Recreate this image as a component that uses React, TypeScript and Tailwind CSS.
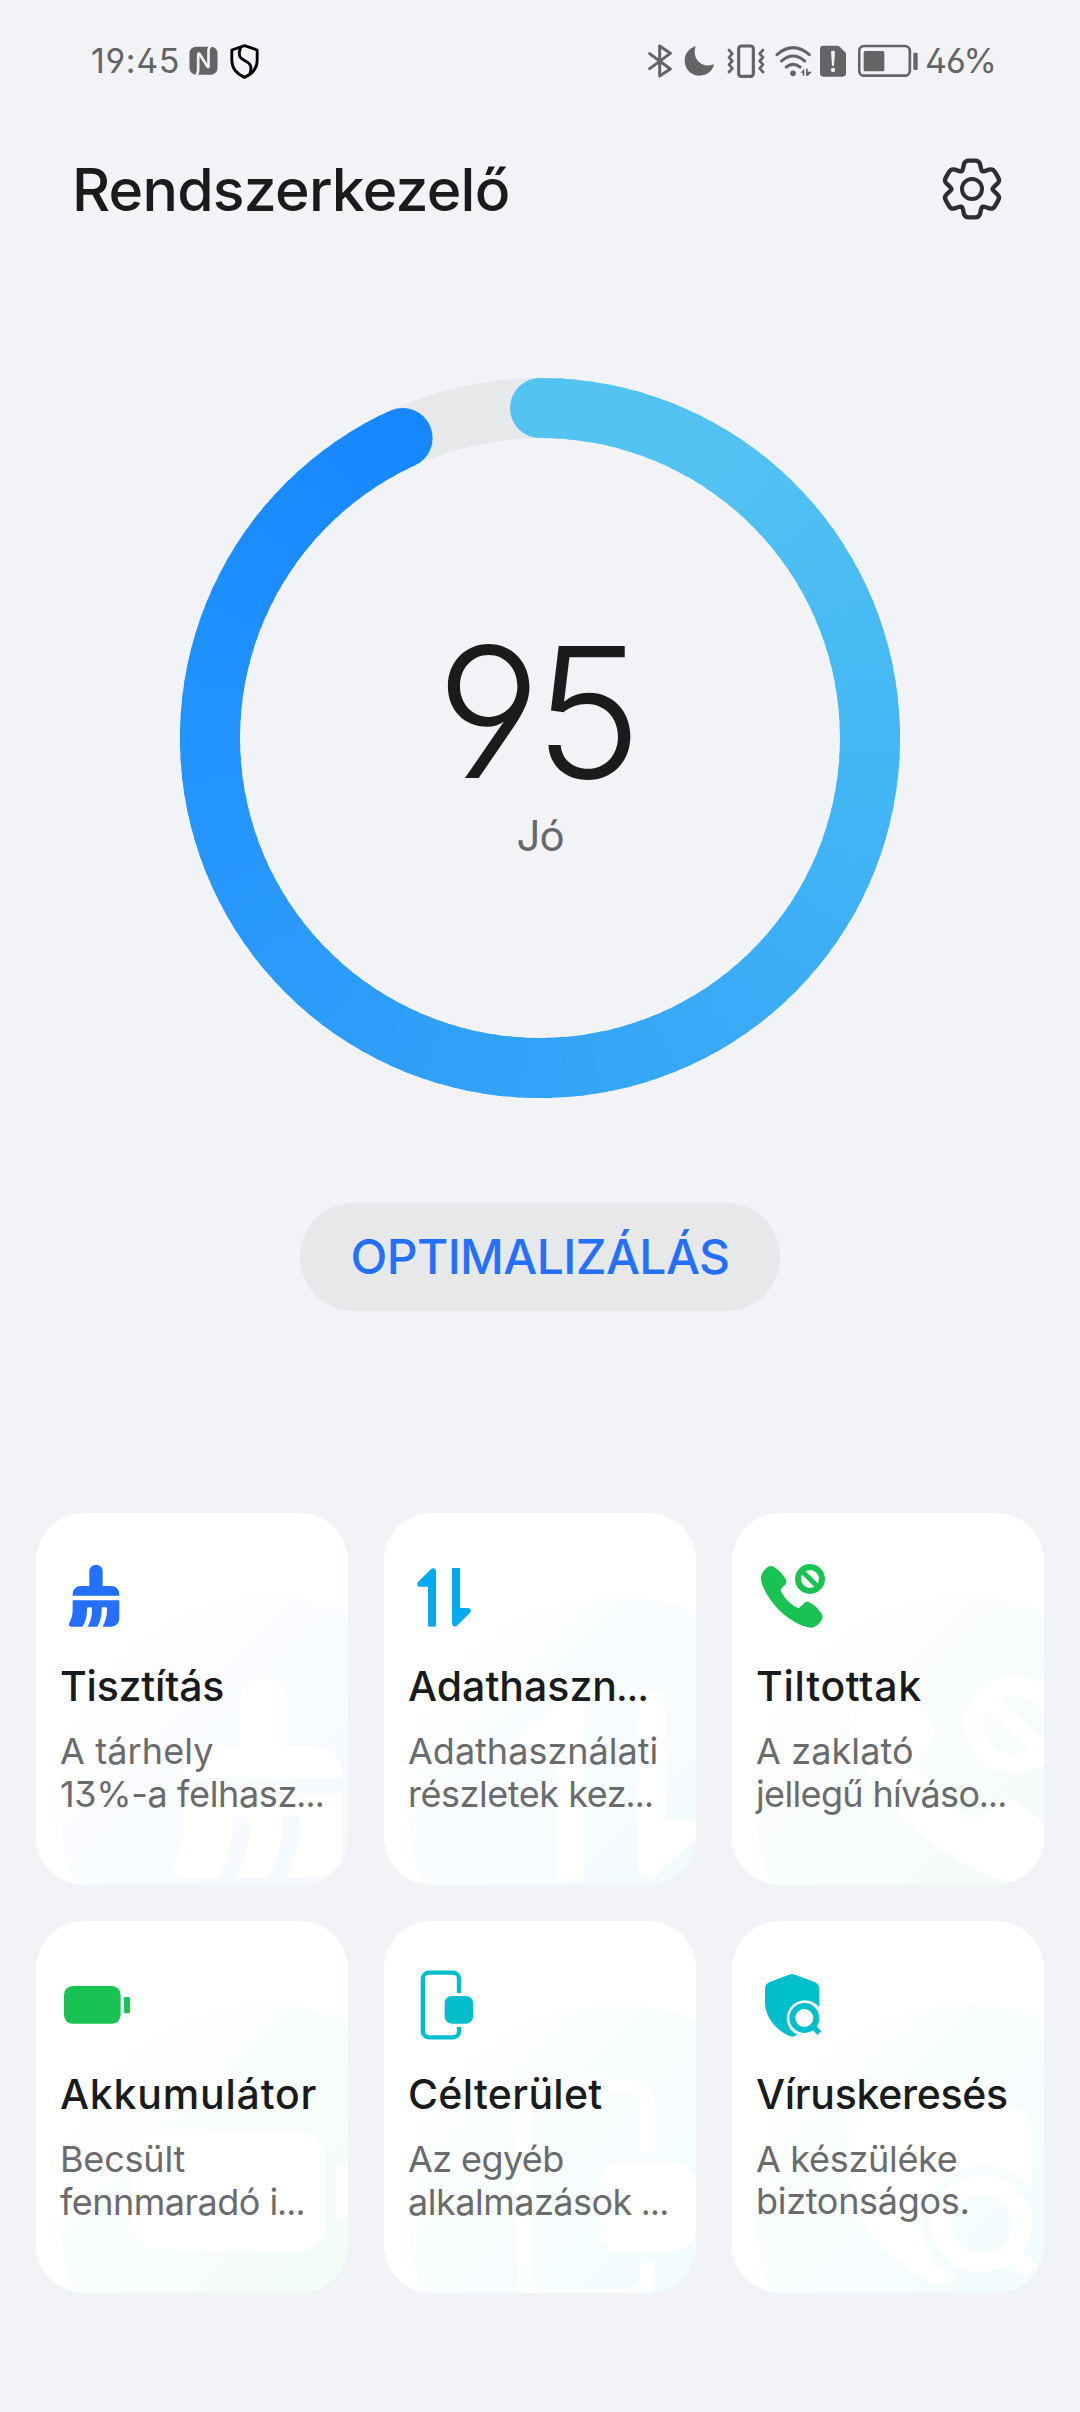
import type { ReactNode } from "react";

const RING_CENTER = 360;
const RING_RADIUS = 330;
const RING_SWEEP = 335.4;

const RING_STOPS: [number, [number, number, number]][] = [
  [0, [83, 196, 241]],
  [28, [82, 195, 241]],
  [90, [68, 183, 245]],
  [180, [51, 163, 249]],
  [270, [34, 147, 255]],
  [336, [22, 135, 255]],
];

function ringColor(deg: number) {
  for (let i = 1; i < RING_STOPS.length; i++) {
    const [d1, c1] = RING_STOPS[i];
    const [d0, c0] = RING_STOPS[i - 1];
    if (deg <= d1) {
      const t = (deg - d0) / (d1 - d0);
      return `rgb(${c0.map((v, k) => Math.round(v + (c1[k] - v) * t)).join(",")})`;
    }
  }
  return "rgb(22,135,255)";
}

function ringPoint(deg: number) {
  const a = ((deg - 90) * Math.PI) / 180;
  return [RING_CENTER + RING_RADIUS * Math.cos(a), RING_CENTER + RING_RADIUS * Math.sin(a)];
}

function ScoreRing() {
  const count = 130;
  const step = RING_SWEEP / count;
  const [ex, ey] = ringPoint(RING_SWEEP);
  return (
    <svg viewBox="0 0 720 720" className="col-start-1 row-start-1 size-[720px]">
      <circle cx={360} cy={360} r={330} fill="none" stroke="#e6e8ea" strokeWidth={60} />
      <circle cx={360} cy={30} r={30} fill={ringColor(0)} />
      <circle cx={ex} cy={ey} r={30} fill={ringColor(RING_SWEEP)} />
      {Array.from({ length: count }, (_, i) => {
        const from = i * step;
        const to = Math.min(RING_SWEEP, from + step * 1.4);
        const [x0, y0] = ringPoint(from);
        const [x1, y1] = ringPoint(to);
        return (
          <path
            key={i}
            d={`M${x0} ${y0}A330 330 0 0 1 ${x1} ${y1}`}
            fill="none"
            stroke={ringColor(from)}
            strokeWidth={60}
          />
        );
      })}
    </svg>
  );
}

/* Closed polygon with every corner rounded by a quadratic curve. */
function roundedPath(pts: number[][], r: number) {
  const n = pts.length;
  const toward = (a: number[], b: number[]) => {
    const len = Math.hypot(b[0] - a[0], b[1] - a[1]);
    const t = Math.min(0.5, r / len);
    return [a[0] + (b[0] - a[0]) * t, a[1] + (b[1] - a[1]) * t];
  };
  return (
    pts
      .map((p, i) => {
        const before = toward(p, pts[(i + n - 1) % n]);
        const after = toward(p, pts[(i + 1) % n]);
        return `${i ? "L" : "M"}${before.join(" ")}Q${p.join(" ")} ${after.join(" ")}`;
      })
      .join("") + "Z"
  );
}

function GearIcon() {
  const pts: number[][] = [];
  for (let k = 0; k < 6; k++) {
    const base = k * 60;
    for (const [deg, rad] of [
      [-23, 68],
      [-14.5, 88],
      [14.5, 88],
      [23, 68],
      [30, 60],
    ]) {
      const a = ((base + deg - 90) * Math.PI) / 180;
      pts.push([rad * Math.cos(a), rad * Math.sin(a)]);
    }
  }
  return (
    <svg viewBox="-96 -96 192 192" className="size-16" fill="none" stroke="#2d2e2f" strokeWidth={13} strokeLinejoin="round">
      <path d={roundedPath(pts, 13)} />
      <circle r={30} strokeWidth={12} />
    </svg>
  );
}

const BroomShape = () => (
  <g>
    <path d="M110 248V243a24 24 0 0 1 24-24H160V175a20 20 0 0 1 40 0V219H226a24 24 0 0 1 24 24V248Z" />
    <path d="M110 262H250V317a24 24 0 0 1-24 24H200C209 325 213 310 213 292V287a4 4 0 0 0-4-4H201a4 4 0 0 0-4 4V292C197 312 192 328 184 341H155C164 325 168 310 168 292V287a4 4 0 0 0-4-4H157a4 4 0 0 0-4 4V292C153 312 148 328 139 341H106C100 341 97 335 100 329C107 315 110 305 110 290Z" />
  </g>
);

const DataShape = () => (
  <g>
    <path d="M156 337a4 4 0 0 1-4 4H136a4 4 0 0 1-4-4V221H107C100 221 97 212 102 207L141 168C147 163 156 167 156 174Z" />
    <path d="M204 169a4 4 0 0 1 4-4H224a4 4 0 0 1 4 4V285H253C260 285 263 294 258 299L219 338C213 343 204 339 204 332Z" />
  </g>
);

const BlockedShape = () => (
  <g transform="translate(-36 -39)">
    <path d="M123 232C124 220 132 210 142 202C149 197 157 196 164 202C178 212 190 225 197 237C201 244 199 250 194 256L184 266C182 269 182 271 184 275C193 294 212 313 230 322C234 325 237 324 239 322L251 311C257 305 264 304 271 308C285 316 297 328 304 340C309 348 308 356 303 363C295 374 288 381 276 383C250 384 200 358 166 318C138 284 122 252 123 232Z" />
    <circle cx={270} cy={237} r={36} fill="none" stroke="currentColor" strokeWidth={18} />
    <path d="M246 213L294 261" stroke="currentColor" strokeWidth={15} />
  </g>
);

const BatteryShape = () => (
  <g transform="translate(-48 -33)">
    <rect x={132} y={228} width={170} height={113} rx={26} />
    <rect x={311.5} y={261} width={18.5} height={49} rx={4} />
  </g>
);

const DropzoneShape = () => (
  <g transform="translate(-42 -33)">
    <path
      d="M267 249V206a18 18 0 0 0-18-18H176.500a18 18 0 0 0-18 18V364a18 18 0 0 0 18 18H249a18 18 0 0 0 18-18V351"
      fill="none"
      stroke="currentColor"
      strokeWidth={13}
    />
    <rect x={224} y={258} width={85.5} height={83} rx={21} />
  </g>
);

const ShieldSearchShape = () => (
  <g transform="translate(-36 -33)">
    <path d="M209 193.500Q216 190.500 223 193.500L284 216Q298 222 298 238V293A54 54 0 1 0 232 374Q223 380 216 380C206 380 135 345 135 275V238Q135 222 149 216Z" />
    <circle cx={253} cy={324} r={36} fill="none" stroke="currentColor" strokeWidth={18} />
    <path d="M278 349L298 369" stroke="currentColor" strokeWidth={16} />
  </g>
);

type Card = {
  title: string;
  titleClass: string;
  lines: [string, string];
  lineClasses: [string, string];
  color: string;
  tint: string;
  shape: ReactNode;
  /* placement of the enlarged silhouette: x scale, y scale, x offset, y offset */
  ghost: [number, number, number, number];
};

const CARDS: Card[] = [
  { title: "Tisztítás", titleClass: "tracking-[-0.2px]", lines: ["A tárhely", "13%-a felhasz…"], lineClasses: ["tracking-[0.1px]", "tracking-[-0.35px]"], color: "#256fff", tint: "#2f8cff", shape: <BroomShape />, ghost: [3.39, 3.23, 70.7, -6.6] },
  { title: "Adathaszn…", titleClass: "", lines: ["Adathasználati", "részletek kez…"], lineClasses: ["", "tracking-[-0.45px]"], color: "#00aaee", tint: "#12a9f5", shape: <DataShape />, ghost: [3.4, 3.22, 70, 0.6] },
  { title: "Tiltottak", titleClass: "tracking-[0.7px]", lines: ["A zaklató", "jellegű híváso…"], lineClasses: ["tracking-[0.1px]", "tracking-[-0.65px]"], color: "#19c353", tint: "#22b866", shape: <BlockedShape />, ghost: [3.365, 3.24, 59.6, -6.6] },
  { title: "Akkumulátor", titleClass: "tracking-[0.8px]", lines: ["Becsült", "fennmaradó i…"], lineClasses: ["tracking-[-0.2px]", "tracking-[-0.5px]"], color: "#19c353", tint: "#19c35a", shape: <BatteryShape />, ghost: [3.41, 3.23, 2.7, -2.8] },
  { title: "Célterület", titleClass: "tracking-[0.3px]", lines: ["Az egyéb", "alkalmazások …"], lineClasses: ["tracking-[-0.6px]", "tracking-[-0.5px]"], color: "#00bfca", tint: "#00c0d8", shape: <DropzoneShape />, ghost: [3.4, 3.24, 25.8, -6] },
  { title: "Víruskeresés", titleClass: "tracking-[-0.3px]", lines: ["A készüléke", "biztonságos."], lineClasses: ["tracking-[-0.3px]", "tracking-[-0.3px]"], color: "#00bfca", tint: "#00b8dc", shape: <ShieldSearchShape />, ghost: [3.356, 3.227, 19.8, -32] },
];

/* Sets a trailing ellipsis in a face with narrower dots. */
function Clipped({ text }: { text: string }) {
  if (!text.endsWith("…")) return <>{text}</>;
  return (
    <>
      {text.slice(0, -1)}
      <span className="font-['Lato',sans-serif] tracking-normal">…</span>
    </>
  );
}

function FeatureCard({ card, id }: { card: Card; id: string }) {
  const [sx, sy, tx, ty] = card.ghost;
  return (
    <div className="relative h-[372px] overflow-hidden rounded-[48px] bg-white pl-6 pt-12">
      <svg viewBox="0 0 936 1116" className="absolute inset-0 size-full">
        <defs>
          <linearGradient id={id} gradientUnits="userSpaceOnUse" x1={300} y1={500} x2={880} y2={1080}>
            <stop offset="0" stopColor={card.tint} stopOpacity={0.012} />
            <stop offset="1" stopColor={card.tint} stopOpacity={0.052} />
          </linearGradient>
        </defs>
        <circle cx={702} cy={882} r={630} fill={`url(#${id})`} />
        <g transform={`translate(${tx} ${ty}) scale(${sx} ${sy})`} className="text-white" fill="currentColor">
          {card.shape}
        </g>
      </svg>
      <div className="relative">
        <svg viewBox="72 144 216 216" className="size-[72px] overflow-visible" fill="currentColor" style={{ color: card.color }}>
          {card.shape}
        </svg>
        <h2 className={`mt-7 text-[41px] leading-[50px] font-medium whitespace-nowrap text-[#1a1b1b] ${card.titleClass}`}>
          <Clipped text={card.title} />
        </h2>
        <p className="mt-[19px] flex flex-col text-[36px] leading-[42px] whitespace-nowrap text-[#6a6b6c]">
          {card.lines.map((line, i) => (
            <span key={line} className={card.lineClasses[i]}>
              <Clipped text={line} />
            </span>
          ))}
        </p>
      </div>
    </div>
  );
}

function StatusBar() {
  return (
    <div className="flex h-[120px] items-center justify-between pr-[86px] pl-[91px] text-[34px] leading-10 text-[#636465]">
      <div className="flex items-center">
        <span className="mt-[2px] w-[98px] tracking-[0.6px]">19:45</span>
        <svg viewBox="360 40 86 108" className="mt-[2px] h-9 w-[29px]">
          <rect x={361} y={51} width={84} height={84} rx={20} fill="currentColor" />
          <path d="M382 136Q387 130 387 120V76Q387 68 392 74L414 110Q418 116 418 108V64Q418 54 424 50" fill="none" stroke="#f1f3f7" strokeWidth={8} />
        </svg>
        <svg viewBox="482 40 86 108" className="mt-[2px] ml-3 h-9 w-[29px]" fill="none" stroke="#000" strokeWidth={8.5} strokeLinejoin="round">
          <path d="M525 48L563 61V92C563 118 548 133 525 143C502 133 487 118 487 92V61Z" />
          <path d="M513 54C506 74 508 84 524 92C545 102 548 112 541 134" />
        </svg>
      </div>
      <div className="flex items-center">
        <svg viewBox="54 40 72 108" className="mt-[2px] h-9 w-6" fill="none" stroke="currentColor" strokeWidth={9} strokeLinejoin="round" strokeLinecap="round">
          <path d="M59 72L121 118L89 139V49L121 71L59 117" />
        </svg>
        <svg viewBox="162 40 93 108" className="mt-[2px] ml-3 h-9 w-[31px]" fill="currentColor">
          <path d="M197 49C174 57 164 74 164 93C164 118 184 138 209 138C231 138 248 124 252 104C241 109 226 109 214 102C196 92 190 71 197 49Z" />
        </svg>
        <svg viewBox="288 40 120 108" className="mt-[2px] ml-[11px] h-9 w-10" fill="none" stroke="currentColor" strokeWidth={9.5} strokeLinejoin="round">
          <rect x={326} y={49} width={44} height={91} rx={8} />
          <path d="M297 61L307 72L297 83L307 94L297 105L307 116L297 127M399 61L389 72L399 83L389 94L399 105L389 116L399 127" strokeWidth={8} strokeLinecap="round" />
        </svg>
        <svg viewBox="435 40 114 108" className="mt-[2px] ml-[9px] h-9 w-[38px]" fill="none" stroke="currentColor" strokeWidth={9} strokeLinecap="round">
          <path d="M441 75Q489 33 538 75M455 94Q489 64 524 94M469 112Q489 96 510 112" />
          <circle cx={489} cy={131} r={8.5} fill="currentColor" stroke="none" />
          <path d="M511 129L523 117V138H518V129ZM528 117H533V126H546L534 138H528Z" fill="currentColor" stroke="none" />
        </svg>
        <svg viewBox="570 40 78 108" className="mt-[2px] ml-[7px] h-9 w-[26px]" fill="currentColor">
          <path d="M580 48H622Q626 48 629 51L645 67Q648 70 648 74V131A10 10 0 0 1 638 141H580A10 10 0 0 1 570 131V58A10 10 0 0 1 580 48Z" />
          <path d="M603 66Q603 63 609 63T615 66L612 108H606Z" fill="#f1f3f7" />
          <circle cx={609} cy={121} r={6.5} fill="#f1f3f7" />
        </svg>
        <svg viewBox="684 40 180 108" className="mt-[2px] ml-3 h-9 w-[60px]" fill="currentColor">
          <rect x={687.5} y={49} width={152} height={89} rx={15} fill="none" stroke="currentColor" strokeWidth={8} />
          <rect x={701} y={64} width={62} height={61} rx={5} />
          <rect x={850} y={69} width={13} height={52} rx={4} />
        </svg>
        <span className="mt-[2px] ml-[7px] w-[69px] tracking-[-1px]">46%</span>
      </div>
    </div>
  );
}

export default function App() {
  return (
    <div className="flex h-[2412px] w-[1080px] flex-col overflow-hidden bg-[#f1f3f7] font-['Inter','Noto_Sans',sans-serif] [font-feature-settings:'cv03','cv04','ss01']">
      <StatusBar />
      <header className="flex h-[138px] items-center justify-between pr-[76px] pl-[72px]">
        <h1 className="mt-[2px] text-[59px] leading-[72px] font-medium tracking-[-0.8px] text-[#1a1b1b]">Rendszerkezelő</h1>
        <GearIcon />
      </header>
      <main className="flex flex-col items-center pt-[120px]">
        <section className="grid">
          <ScoreRing />
          <div className="col-start-1 row-start-1 flex flex-col items-center pt-[244px]">
            <div className="pr-[9px] text-[182px] leading-[180px] font-light tracking-[-7px] text-[#1a1b1b]">95</div>
            <div className="mt-2 text-[42px] leading-[52px] tracking-[-1.2px] text-[#666768]">Jó</div>
          </div>
        </section>
        <button className="mt-[105px] h-[108px] w-[480px] rounded-full bg-[#e6e8ea] text-[48px] leading-[60px] font-medium tracking-[-0.6px] text-[#256fff]">
          OPTIMALIZÁLÁS
        </button>
        <section className="mt-[202px] grid w-[1008px] grid-cols-3 gap-9">
          {CARDS.map((card, i) => (
            <FeatureCard key={card.title} card={card} id={`tint-${i}`} />
          ))}
        </section>
      </main>
    </div>
  );
}
